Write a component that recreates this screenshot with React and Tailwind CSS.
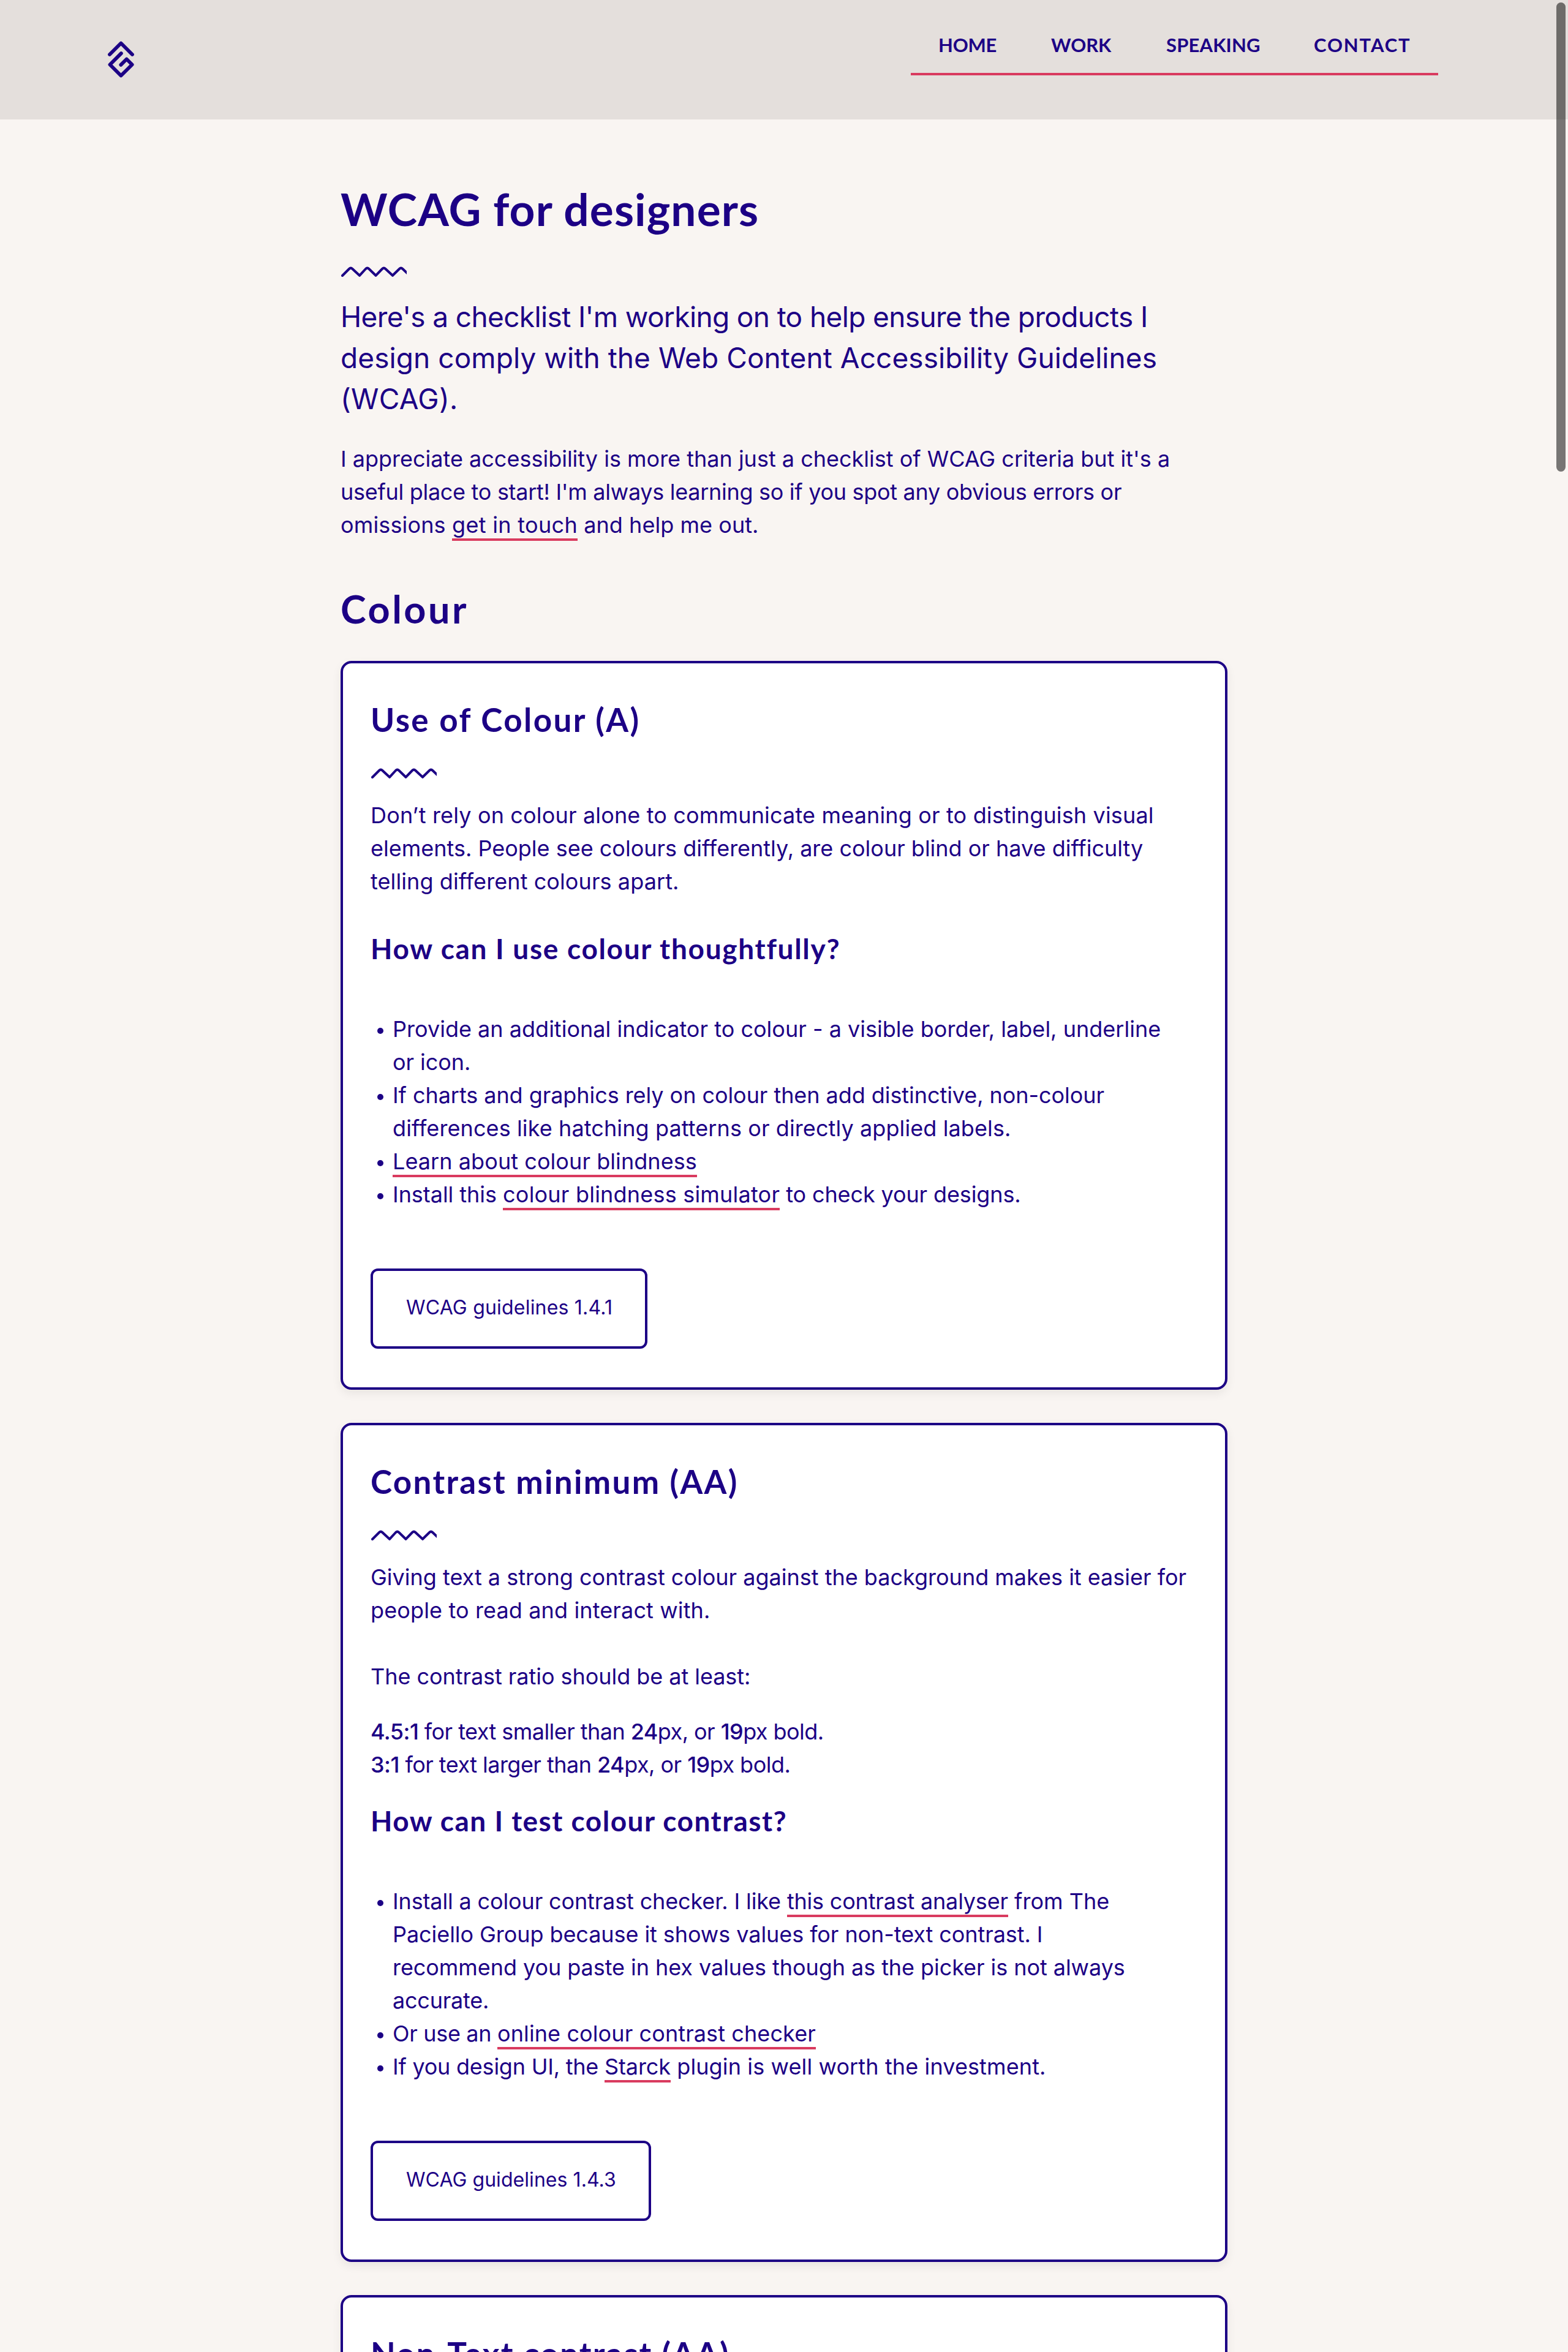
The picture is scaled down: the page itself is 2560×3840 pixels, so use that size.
function Logo() {
  return (
    <svg
      className="block h-[60px] w-[43px]"
      viewBox="228 201 129 180"
      fill="none"
      stroke="#1c0085"
      strokeWidth="17.5"
      strokeLinecap="round"
      strokeLinejoin="round"
    >
      <path d="M237 267 L292.5 211.5 L348 267" />
      <path d="M293.5 261.500 L238.500 316.500 L292.500 370.500 L347 316.500 L320 289.500 L292 317.500" />
    </svg>
  );
}

function Squiggle({ className = "" }) {
  return (
    <svg
      className={`ml-px block h-[17px] w-[107px] ${className}`}
      viewBox="0 0 107 17"
      fill="none"
      stroke="#1c0085"
      strokeWidth="4"
      strokeLinecap="round"
      strokeLinejoin="round"
    >
      <path d="M2 15 L13 4 Q15.700 1.400 18.400 4 L30 14.800 L40 4 Q42.700 1.400 45.400 4 L56.500 14.800 L67 4 Q69.700 1.400 72.400 4 L84 14.800 L95 4 Q97.700 1.400 100.400 4 L112 15" />
    </svg>
  );
}

function Line({ className = "", children }) {
  return <span className={`block whitespace-pre ${className}`}>{children}</span>;
}

function Seg({ className = "", children }) {
  return <span className={className}>{children}</span>;
}

function Link({ className = "", children }) {
  return (
    <a href="#" className={`border-b-4 border-[#d93b5f] ${className}`}>
      {children}
    </a>
  );
}

function Num({ children }) {
  return <span className="font-medium">{children}</span>;
}

function Card({ title, titleClass, children }) {
  return (
    <section className="rounded-[18px] border-4 border-[#1c0085] bg-white px-[45px] pt-[60px] pb-[63px] shadow-[0_6px_16px_rgba(0,0,0,0.07)]">
      <h3
        className={`font-[Lato,sans-serif] text-[53px] leading-[64px] font-bold whitespace-nowrap ${titleClass}`}
      >
        {title}
      </h3>
      <Squiggle className="mt-[47px]" />
      {children}
    </section>
  );
}

function Question({ className = "", children }) {
  return (
    <h4 className={`font-[Lato,sans-serif] text-[46px] leading-[56px] font-bold whitespace-nowrap ${className}`}>
      {children}
    </h4>
  );
}

function Item({ children }) {
  return (
    <li className="flex items-start gap-[15px] pl-[11px]">
      <span className="mt-[25px] size-[10px] shrink-0 rounded-full bg-[#1c0085]" />
      <div>{children}</div>
    </li>
  );
}

function Button({ className = "", children }) {
  return (
    <a
      href="#"
      className={`mt-[94px] flex h-[131px] items-center rounded-[12px] border-4 border-[#1c0085] pb-[3px] pl-[54px] text-[32px] whitespace-nowrap ${className}`}
    >
      {children}
    </a>
  );
}

export default function App() {
  return (
    <div className="relative h-[3840px] w-[2560px] overflow-hidden bg-[#f9f5f2] font-[Inter,sans-serif] text-[36px] leading-[54px] text-[#1c0085]">
      <header className="flex h-[195px] items-start justify-between bg-[#e4dfdc] pr-[212px] pl-[176px]">
        <a href="#" className="pt-[67px]">
          <Logo />
        </a>
        <nav className="flex h-[123px] w-[861px] border-b-4 border-[#d93b5f] pt-[51px] pl-[45px] font-[Lato,sans-serif] text-[31px] leading-[44px] font-bold">
          <a href="#" className="w-[184px] tracking-[-0.24px]">HOME</a>
          <a href="#" className="w-[188px]">WORK</a>
          <a href="#" className="w-[241px] tracking-[0.16px]">SPEAKING</a>
          <a href="#" className="tracking-[1.88px]">CONTACT</a>
        </nav>
      </header>

      <main className="mx-auto w-[1448px] pt-[102px]">
        <h1 className="font-[Lato,sans-serif] text-[73px] leading-[88px] font-bold tracking-[1.1px] whitespace-nowrap">
          WCAG for designers
        </h1>
        <Squiggle className="mt-[50px]" />
        <p className="mt-8 text-[46px] leading-[67px]">
          <Line className="tracking-[-0.63px]">Here's a checklist I'm working on to help ensure the products I</Line>
          <Line className="tracking-[0.08px]">design comply with the Web Content Accessibility Guidelines</Line>
          <Line className="tracking-[0.32px]">(WCAG).</Line>
        </p>
        <p className="mt-[37px]">
          <Line>I appreciate accessibility is more than just a checklist of WCAG criteria but it's a</Line>
          <Line className="tracking-[-0.29px]">
            useful place to start! I'm always learning so if you spot any obvious errors or
          </Line>
          <Line>
            <Seg className="tracking-[0.15px]">{"omissions "}</Seg>
            <Link className="tracking-[0.31px]">get in touch</Link>
            <Seg className="tracking-[0.05px]">{" and help me out."}</Seg>
          </Line>
        </p>

        <h2 className="mt-[72px] font-[Lato,sans-serif] text-[63px] leading-[76px] font-bold tracking-[3.48px]">
          Colour
        </h2>

        <div className="mt-[47px] flex flex-col gap-[54px]">
          <Card title="Use of Colour (A)" titleClass="tracking-[2.42px]">
            <p className="mt-[33px]">
              <Line className="tracking-[0.16px]">
                Don’t rely on colour alone to communicate meaning or to distinguish visual
              </Line>
              <Line>elements. People see colours differently, are colour blind or have difficulty</Line>
              <Line className="tracking-[0.09px]">telling different colours apart.</Line>
            </p>
            <Question className="mt-[55px] tracking-[1.69px]">How can I use colour thoughtfully?</Question>
            <ul className="mt-[76px]">
              <Item>
                <Line className="tracking-[0.02px]">
                  Provide an additional indicator to colour - a visible border, label, underline
                </Line>
                <Line className="tracking-[-0.06px]">or icon.</Line>
              </Item>
              <Item>
                <Line className="tracking-[-0.06px]">
                  If charts and graphics rely on colour then add distinctive, non-colour
                </Line>
                <Line className="tracking-[0.1px]">
                  differences like hatching patterns or directly applied labels.
                </Line>
              </Item>
              <Item>
                <Line>
                  <Link className="tracking-[0.07px]">Learn about colour blindness</Link>
                </Line>
              </Item>
              <Item>
                <Line>
                  <Seg className="tracking-[-0.04px]">{"Install this "}</Seg>
                  <Link className="tracking-[0.21px]">colour blindness simulator</Link>
                  <Seg className="tracking-[-0.12px]">{" to check your designs."}</Seg>
                </Line>
              </Item>
            </ul>
            <Button className="w-[452px] tracking-[0.2px]">WCAG guidelines 1.4.1</Button>
          </Card>

          <Card title="Contrast minimum (AA)" titleClass="tracking-[2.32px]">
            <p className="mt-[33px]">
              <Line>Giving text a strong contrast colour against the background makes it easier for</Line>
              <Line className="tracking-[0.13px]">people to read and interact with.</Line>
            </p>
            <p className="mt-[54px]">
              <Line className="tracking-[-0.05px]">The contrast ratio should be at least:</Line>
            </p>
            <p className="mt-[36px]">
              <Line className="tracking-[-0.55px]">
                <Num>4.5:1</Num> for text smaller than <Num>24</Num>px, or <Num>19</Num>px bold.
              </Line>
              <Line className="tracking-[-0.53px]">
                <Num>3:1</Num> for text larger than <Num>24</Num>px, or <Num>19</Num>px bold.
              </Line>
            </p>
            <Question className="mt-[37px] tracking-[1.48px]">How can I test colour contrast?</Question>
            <ul className="mt-[76px]">
              <Item>
                <Line>
                  <Seg className="tracking-[-0.14px]">{"Install a colour contrast checker. I like "}</Seg>
                  <Link className="tracking-[-0.19px]">this contrast analyser</Link>
                  <Seg className="tracking-[0.04px]">{" from The"}</Seg>
                </Line>
                <Line className="tracking-[-0.07px]">
                  Paciello Group because it shows values for non-text contrast. I
                </Line>
                <Line className="tracking-[-0.06px]">
                  recommend you paste in hex values though as the picker is not always
                </Line>
                <Line className="tracking-[-0.23px]">accurate.</Line>
              </Item>
              <Item>
                <Line>
                  <Seg className="tracking-[-0.32px]">{"Or use an "}</Seg>
                  <Link className="tracking-[0.1px]">online colour contrast checker</Link>
                </Line>
              </Item>
              <Item>
                <Line>
                  <Seg className="tracking-[-0.23px]">{"If you design UI, the "}</Seg>
                  <Link className="tracking-[-0.09px]">Starck</Link>
                  <Seg className="tracking-[0.12px]">{" plugin is well worth the investment."}</Seg>
                </Line>
              </Item>
            </ul>
            <Button className="w-[458px] tracking-[0.06px]">WCAG guidelines 1.4.3</Button>
          </Card>

          <Card title="Non-Text contrast (AA)" titleClass="tracking-[2.11px]" />
        </div>
      </main>

      <div className="absolute top-1 left-[2541px] h-[766px] w-[15px] rounded-full bg-black/52" />
    </div>
  );
}
